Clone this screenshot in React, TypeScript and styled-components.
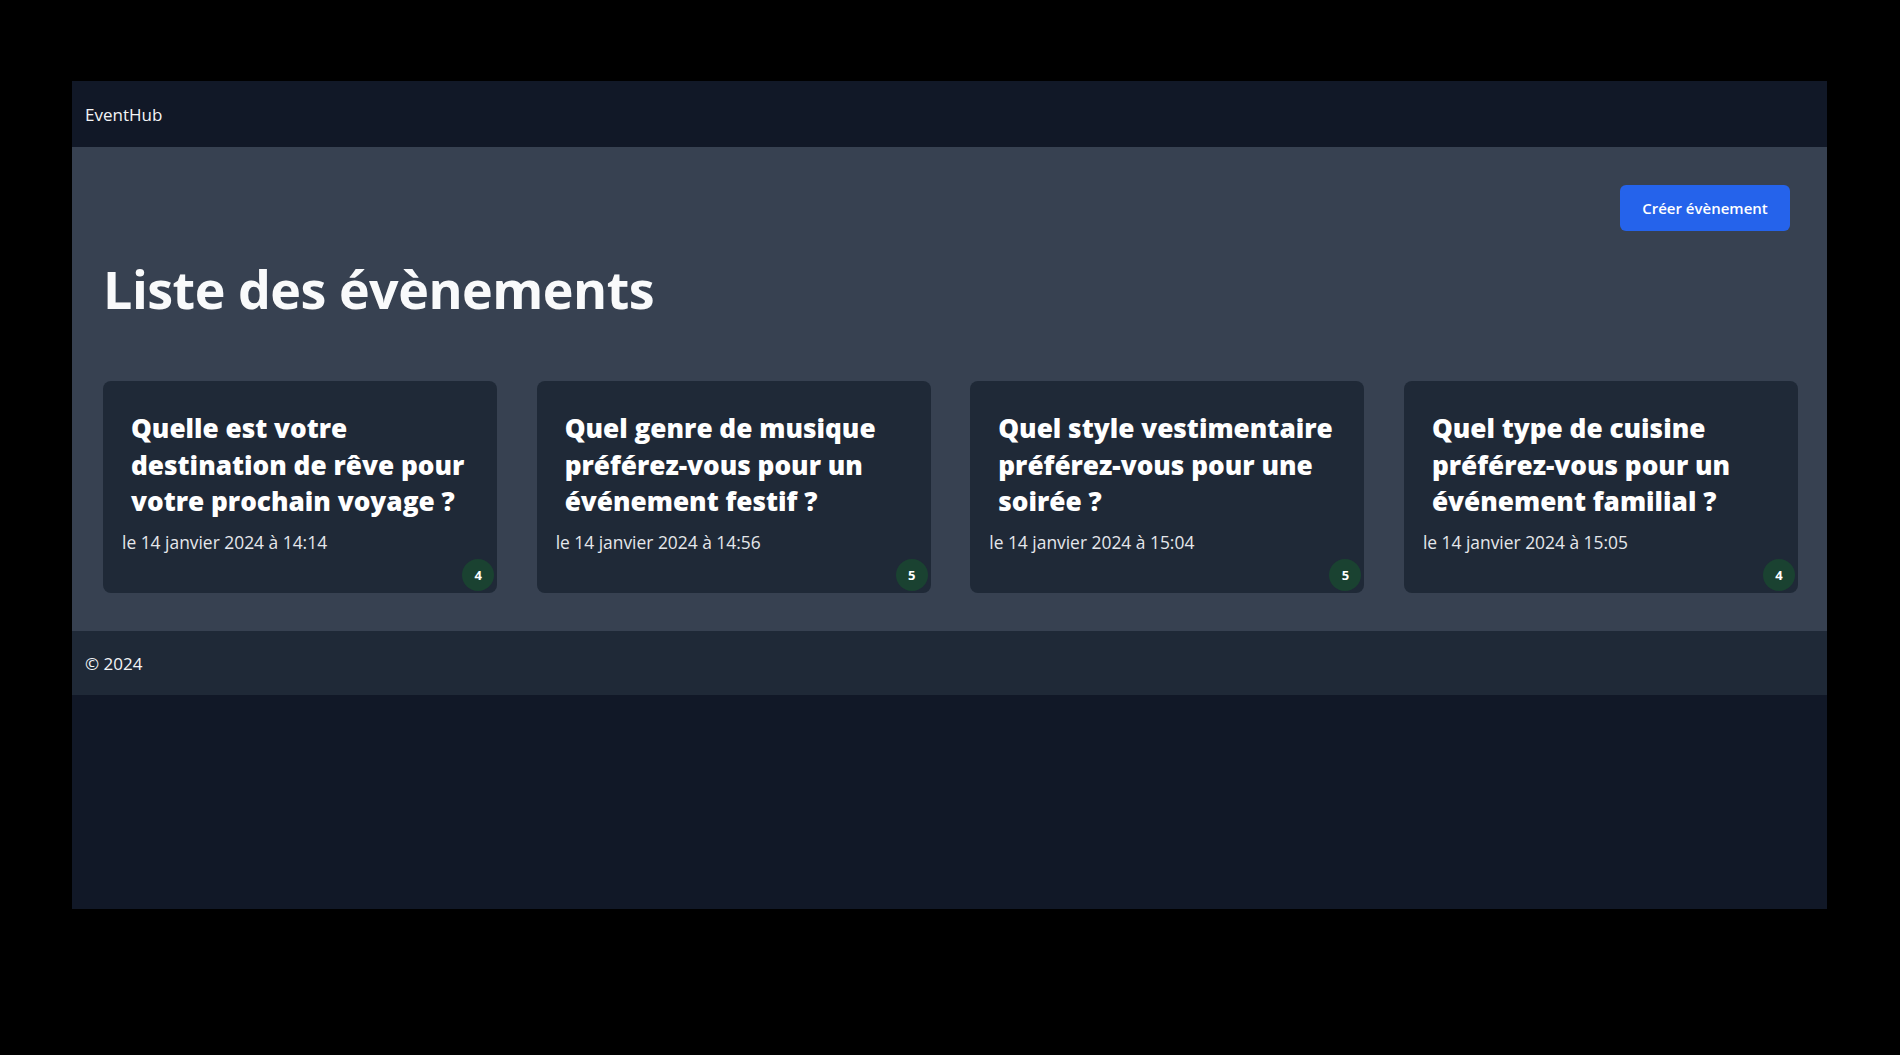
import React from "react";
import styled, { createGlobalStyle } from "styled-components";

const Global = createGlobalStyle`
  html, body { margin: 0; padding: 0; background: #000; }
  body { font-family: "Open Sans", "Noto Sans", sans-serif; }
  * { box-sizing: border-box; }
`;

const Frame = styled.div`
  margin: 81px 0 0 72px;
  width: 1755px;
  height: 828px;
  background: #111827;
  display: flex;
  flex-direction: column;
`;

const Header = styled.header`
  height: 66px;
  flex: none;
  display: flex;
  align-items: center;
  padding: 0 13px;
  color: #f3f4f6;
  font-size: 17px;
`;

const Main = styled.main`
  background: #374151;
  padding: 38px 29px 38px 31px;
  display: flex;
  flex-direction: column;
`;

const Toolbar = styled.div`
  display: flex;
  justify-content: flex-end;
  padding-right: 8px;
`;

const Button = styled.button`
  width: 170px;
  height: 46px;
  border: none;
  border-radius: 6px;
  background: #2563eb;
  color: #fff;
  font-family: inherit;
  font-size: 15px;
  font-weight: 600;
  cursor: pointer;
`;

const Title = styled.h1`
  margin: 28px 0 0 0;
  color: #f9fafb;
  font-size: 52px;
  font-weight: 700;
  line-height: 60px;
  letter-spacing: -0.5px;
`;

const Grid = styled.div`
  margin-top: 62px;
  display: grid;
  grid-template-columns: repeat(4, 1fr);
  gap: 39.5px;
`;

const Card = styled.div`
  position: relative;
  background: #1f2937;
  border-radius: 8px;
  height: 212px;
  padding: 20px 19px;
`;

const CardTitle = styled.h2`
  margin: 0;
  padding: 9px 9px 0;
  color: #fff;
  font-size: 26.2px;
  font-weight: 800;
  line-height: 36.7px;
`;

const CardDate = styled.p`
  margin: 10px 0 0;
  color: #e5e7eb;
  font-size: 17.4px;
  line-height: 24px;
`;

const Badge = styled.span`
  position: absolute;
  right: 3px;
  bottom: 2px;
  width: 32px;
  height: 32px;
  border-radius: 50%;
  background: #1a4231;
  color: #fff;
  font-size: 13px;
  font-weight: 700;
  display: flex;
  align-items: center;
  justify-content: center;
`;

const Footer = styled.footer`
  background: #1f2937;
  height: 64px;
  flex: none;
  display: flex;
  align-items: center;
  padding: 0 13px;
  color: #f3f4f6;
  font-size: 17px;
`;

const events = [
  { title: "Quelle est votre destination de rêve pour votre prochain voyage ?", date: "le 14 janvier 2024 à 14:14", count: 4 },
  { title: "Quel genre de musique préférez-vous pour un événement festif ?", date: "le 14 janvier 2024 à 14:56", count: 5 },
  { title: "Quel style vestimentaire préférez-vous pour une soirée ?", date: "le 14 janvier 2024 à 15:04", count: 5 },
  { title: "Quel type de cuisine préférez-vous pour un événement familial ?", date: "le 14 janvier 2024 à 15:05", count: 4 },
];

export default function App() {
  return (
    <>
      <Global />
      <Frame>
        <Header>EventHub</Header>
        <Main>
          <Toolbar>
            <Button>Créer évènement</Button>
          </Toolbar>
          <Title>Liste des évènements</Title>
          <Grid>
            {events.map((e) => (
              <Card key={e.date}>
                <CardTitle>{e.title}</CardTitle>
                <CardDate>{e.date}</CardDate>
                <Badge>{e.count}</Badge>
              </Card>
            ))}
          </Grid>
        </Main>
        <Footer>© 2024</Footer>
      </Frame>
    </>
  );
}
